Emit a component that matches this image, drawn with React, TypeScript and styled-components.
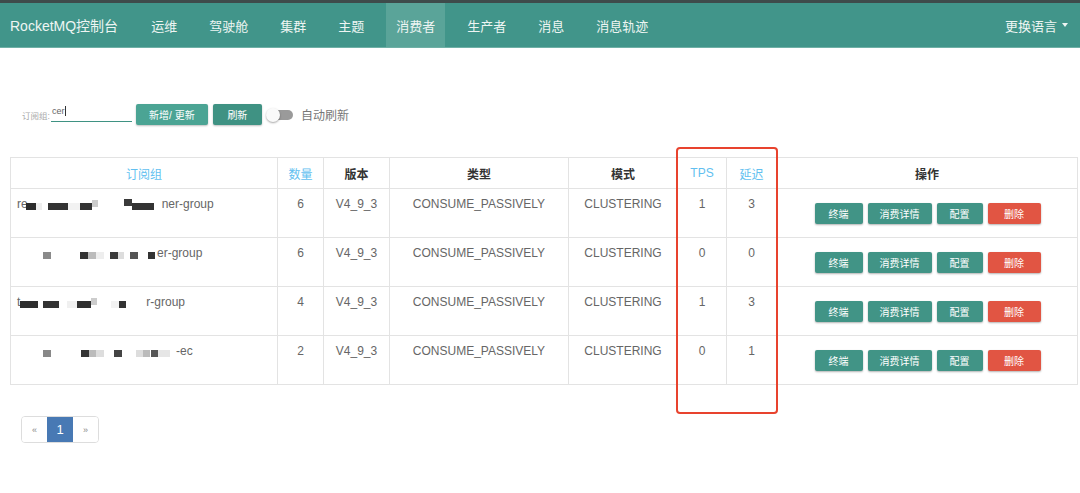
import styled, { createGlobalStyle } from 'styled-components'

const GlobalStyle = createGlobalStyle`
  * { box-sizing: border-box; }
  body {
    margin: 0;
    background: #fff;
    font-family: "Liberation Sans", "Noto Sans CJK SC", sans-serif;
  }
`

const Page = styled.div`
  position: relative;
  width: 1080px;
  height: 493px;
  overflow: hidden;
`

const NavBar = styled.nav`
  height: 48px;
  border-top: 3px solid #3e4b4b;
  border-bottom: 1px solid #6fb0a6;
  background: #41958a;
  display: flex;
  align-items: stretch;
  padding: 0 10px;
  color: #eef5f3;
`

const Brand = styled.div`
  display: flex;
  align-items: center;
  font-size: 14px;
  margin-right: 17px;
  white-space: nowrap;
`

const NavItem = styled.div<{ $active?: boolean }>`
  display: flex;
  align-items: center;
  padding: 0 10px;
  margin: 0 6px;
  font-size: 13px;
  white-space: nowrap;
  background: ${({ $active }) => ($active ? '#5aa499' : 'transparent')};
`

const NavRight = styled.div`
  margin-left: auto;
  display: flex;
  align-items: center;
  gap: 5px;
  font-size: 13px;
  padding-right: 2px;
`

const Caret = styled.span`
  width: 0;
  height: 0;
  border-left: 3.5px solid transparent;
  border-right: 3.5px solid transparent;
  border-top: 4px solid #eef5f3;
`

const FormRow = styled.div`
  display: flex;
  align-items: center;
  height: 21px;
  margin: 56px 0 0 22px;
`

const Label = styled.span`
  font-size: 8.5px;
  color: #aaa;
  margin-right: 1px;
`

const Input = styled.div`
  width: 81px;
  height: 16px;
  border-bottom: 1.5px solid #3f9283;
  font-size: 9px;
  color: #666;
  padding-left: 1px;
  margin-top: -2px;
  display: flex;
  align-items: flex-start;
`

const Cursor = styled.span`
  display: inline-block;
  width: 1px;
  height: 10px;
  background: #333;
  margin-left: 1px;
`

const FormButton = styled.button<{ $dark?: boolean; $w: number }>`
  width: ${({ $w }) => $w}px;
  height: 21px;
  margin-left: 4px;
  border: none;
  border-radius: 2px;
  background: ${({ $dark }) => ($dark ? '#3f9283' : '#4ba494')};
  color: #fff;
  font-size: 10px;
  font-family: inherit;
  box-shadow: 0 1px 2px rgba(0, 0, 0, 0.25);
  padding: 0;
`

const Toggle = styled.div`
  position: relative;
  width: 28px;
  height: 14px;
  margin-left: 4px;
  display: flex;
  align-items: center;
`

const Track = styled.div`
  margin-left: 6px;
  width: 21px;
  height: 10px;
  border-radius: 5px;
  background: #9a9a9a;
`

const Knob = styled.div`
  position: absolute;
  left: 0;
  top: 0;
  width: 14px;
  height: 14px;
  border-radius: 50%;
  background: #fafafa;
  box-shadow: 0 1px 2px rgba(0, 0, 0, 0.35);
`

const ToggleLabel = styled.span`
  margin-left: 7px;
  font-size: 12px;
  color: #777;
`

const Table = styled.table`
  margin: 32px 0 0 10px;
  width: 1068px;
  border-collapse: collapse;
  table-layout: fixed;
  font-size: 12px;
  color: #666;
  border: 1px solid #e3e3e3;
`

const Th = styled.th<{ $sort?: boolean }>`
  height: 31px;
  border: 1px solid #e3e3e3;
  font-weight: ${({ $sort }) => ($sort ? 'normal' : 'bold')};
  color: ${({ $sort }) => ($sort ? '#62bff0' : '#333')};
  text-align: center;
  padding: 0;
`

const Td = styled.td<{ $left?: boolean; $middle?: boolean }>`
  height: 49px;
  border: 1px solid #e3e3e3;
  text-align: ${({ $left }) => ($left ? 'left' : 'center')};
  vertical-align: ${({ $middle }) => ($middle ? 'middle' : 'top')};
  padding: ${({ $left }) => ($left ? '8px 6px 0' : '8px 0 0')};
  line-height: 14px;
  white-space: nowrap;
`

const Actions = styled.div`
  display: flex;
  justify-content: center;
  gap: 5px;
  padding-left: 1px;
  margin-top: -8px;
`

const ActionButton = styled.button<{ $danger?: boolean; $w: number }>`
  width: ${({ $w }) => $w}px;
  height: 21px;
  border: none;
  border-radius: 2px;
  background: ${({ $danger }) => ($danger ? '#e15543' : '#419486')};
  color: #fff;
  font-size: 10px;
  font-family: inherit;
  box-shadow: 0 1px 2px rgba(0, 0, 0, 0.3);
  padding: 0;
`

const NameCell = styled.div`
  display: flex;
  align-items: center;
  height: 14px;
`

const Pixel = styled.span<{ $c: string; $w: number; $gap: number; $up?: number }>`
  display: inline-block;
  flex: none;
  width: ${({ $w }) => $w}px;
  height: 7px;
  margin-left: ${({ $gap }) => $gap}px;
  margin-top: ${({ $up }) => ($up ? -$up : 4)}px;
  background: ${({ $c }) => $c};
`

const Pagination = styled.div`
  display: inline-flex;
  margin: 31px 0 0 21px;
  border: 1px solid #ddd;
  border-radius: 4px;
  overflow: hidden;
  height: 27px;
`

const PageCell = styled.div<{ $active?: boolean }>`
  width: ${({ $active }) => ($active ? 26 : 25)}px;
  display: flex;
  align-items: center;
  justify-content: center;
  background: ${({ $active }) => ($active ? '#4879b4' : '#fff')};
  color: ${({ $active }) => ($active ? '#fff' : '#888')};
  font-size: ${({ $active }) => ($active ? 13 : 9)}px;
`

const Highlight = styled.div`
  position: absolute;
  left: 676px;
  top: 147px;
  width: 102px;
  height: 267px;
  border: 2px solid #e8432e;
  border-radius: 4px;
  pointer-events: none;
`

type Block = [number, number, string, number?]

const rows: {
  prefix: string
  blocks: Block[]
  suffix: string
  gap: number
  count: number
  tps: number
  delay: number
}[] = [
  {
    prefix: 're',
    blocks: [
      [-2, 10, '#2b2b2b'],
      [0, 6, '#eee'],
      [6, 20, '#333'],
      [0, 12, '#f2f2f2'],
      [0, 12, '#333'],
      [0, 6, '#ccc', 2],
      [26, 8, '#3a3a3a', 4],
      [0, 22, '#333'],
    ],
    suffix: 'ner-group',
    gap: 8,
    count: 6,
    tps: 1,
    delay: 3,
  },
  {
    prefix: '',
    blocks: [
      [26, 8, '#8a8a8a'],
      [29, 8, '#333'],
      [0, 8, '#bbb'],
      [0, 8, '#eee'],
      [6, 8, '#3a3a3a'],
      [0, 6, '#ddd'],
      [6, 8, '#555'],
      [10, 7, '#333'],
    ],
    suffix: 'er-group',
    gap: 2,
    count: 6,
    tps: 0,
    delay: 0,
  },
  {
    prefix: 't',
    blocks: [
      [0, 18, '#2e2e2e'],
      [5, 16, '#333'],
      [8, 10, '#f0f0f0'],
      [0, 14, '#2f2f2f'],
      [0, 6, '#ccc', 2],
      [14, 8, '#f2f2f2'],
      [0, 7, '#333'],
    ],
    suffix: 'r-group',
    gap: 20,
    count: 4,
    tps: 1,
    delay: 3,
  },
  {
    prefix: '',
    blocks: [
      [26, 8, '#888'],
      [30, 8, '#333'],
      [0, 7, '#bbb'],
      [0, 8, '#ddd'],
      [10, 8, '#444'],
      [14, 7, '#ddd'],
      [0, 7, '#bbb'],
      [1, 7, '#555'],
      [0, 12, '#e6e6e6'],
    ],
    suffix: '-ec',
    gap: 6,
    count: 2,
    tps: 0,
    delay: 1,
  },
]

const navItems = ['运维', '驾驶舱', '集群', '主题', '消费者', '生产者', '消息', '消息轨迹']

const App = () => {
  return (
    <Page>
      <GlobalStyle />
      <NavBar>
        <Brand>RocketMQ控制台</Brand>
        {navItems.map((item) => (
          <NavItem key={item} $active={item === '消费者'}>
            {item}
          </NavItem>
        ))}
        <NavRight>
          更换语言 <Caret />
        </NavRight>
      </NavBar>

      <FormRow>
        <Label>订阅组:</Label>
        <Input>
          cer<Cursor />
        </Input>
        <FormButton $w={72}>新增/ 更新</FormButton>
        <FormButton $dark $w={49} style={{ marginLeft: 5 }}>
          刷新
        </FormButton>
        <Toggle>
          <Track />
          <Knob />
        </Toggle>
        <ToggleLabel>自动刷新</ToggleLabel>
      </FormRow>

      <Table>
        <colgroup>
          <col style={{ width: 267 }} />
          <col style={{ width: 46 }} />
          <col style={{ width: 66 }} />
          <col style={{ width: 179 }} />
          <col style={{ width: 109 }} />
          <col style={{ width: 49 }} />
          <col style={{ width: 50 }} />
          <col />
        </colgroup>
        <thead>
          <tr>
            <Th $sort>订阅组</Th>
            <Th $sort>数量</Th>
            <Th>版本</Th>
            <Th>类型</Th>
            <Th>模式</Th>
            <Th $sort>TPS</Th>
            <Th $sort>延迟</Th>
            <Th>操作</Th>
          </tr>
        </thead>
        <tbody>
          {rows.map((row, i) => (
            <tr key={i}>
              <Td $left>
                <NameCell>
                  {row.prefix}
                  {row.blocks.map(([gap, w, c, up], j) => (
                    <Pixel key={j} $gap={gap} $w={w} $c={c} $up={up} />
                  ))}
                  <span style={{ marginLeft: row.gap }}>{row.suffix}</span>
                </NameCell>
              </Td>
              <Td>{row.count}</Td>
              <Td>V4_9_3</Td>
              <Td>CONSUME_PASSIVELY</Td>
              <Td>CLUSTERING</Td>
              <Td>{row.tps}</Td>
              <Td>{row.delay}</Td>
              <Td $middle>
                <Actions>
                  <ActionButton $w={48}>终端</ActionButton>
                  <ActionButton $w={64}>消费详情</ActionButton>
                  <ActionButton $w={46}>配置</ActionButton>
                  <ActionButton $danger $w={53}>
                    删除
                  </ActionButton>
                </Actions>
              </Td>
            </tr>
          ))}
        </tbody>
      </Table>

      <Pagination>
        <PageCell>«</PageCell>
        <PageCell $active>1</PageCell>
        <PageCell>»</PageCell>
      </Pagination>

      <Highlight />
    </Page>
  )
}

export default App
